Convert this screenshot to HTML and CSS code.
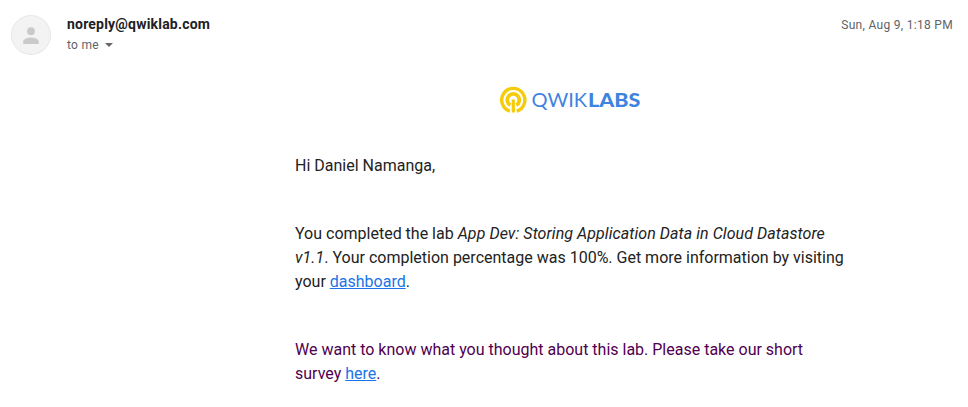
FILE: index.html
```
<!DOCTYPE html>
<html lang="en">
<head>
<meta charset="utf-8">
<title>Qwiklabs</title>
<link rel="stylesheet" href="styles.css">
</head>
<body>
<header class="header">
  <svg class="avatar" width="40" height="40" viewBox="0 0 40 40" aria-hidden="true">
    <circle cx="20" cy="20" r="19.5" fill="#f3f3f3" stroke="#e6e6e6"/>
    <circle cx="20" cy="16.2" r="3.9" fill="#cacaca"/>
    <path d="M12.2 29v-2.4c0-2.6 5.2-4 7.8-4s7.8 1.4 7.8 4V29z" fill="#cacaca"/>
  </svg>
  <div class="sender">
    <div class="address">noreply@qwiklab.com</div>
    <div class="recipient">to me <span class="caret"></span></div>
  </div>
  <time class="date">Sun, Aug 9, 1:18 PM</time>
</header>
<main class="message">
  <svg class="logo" width="142" height="28" viewBox="0 0 142 28" role="img" aria-label="Qwiklabs">
    <g fill="none" stroke="#f5cc0c">
      <path stroke-width="3.4" d="M9.9 25.1A11.6 11.6 0 1 1 16.7 25.1"/>
      <path stroke-width="3.8" d="M10.4 19.2A6 6 0 1 1 16.2 19.2"/>
      <path stroke-width="3.2" d="M13.3 13.5v13"/>
    </g>
    <text class="logo-light" x="31.6" y="20.6" textLength="55.5" lengthAdjust="spacingAndGlyphs">QWIK</text>
    <text class="logo-bold" x="88" y="20.6" textLength="52.3" lengthAdjust="spacingAndGlyphs">LABS</text>
  </svg>
  <p>Hi Daniel Namanga,</p>
  <p>You completed the lab <em>App Dev: Storing Application Data in Cloud Datastore v1.1</em>. Your completion percentage was 100%. Get more information by visiting your <a href="#">dashboard</a>.</p>
  <p class="survey">We want to know what you thought about this lab. Please take our short survey <a href="#">here</a>.</p>
</main>
</body>
</html>
```
FILE: styles.css
```
body {
  margin: 0;
  background: #fff;
  color: #222;
  font-family: Roboto, "Liberation Sans", sans-serif;
}

.header {
  display: flex;
  align-items: flex-start;
  box-sizing: border-box;
  height: 86px;
  padding: 15px 15px 0 11px;
}

.avatar {
  flex: none;
}

.sender {
  margin: -1px 0 0 16px;
}

.address {
  color: #202124;
  font-size: 14px;
  font-weight: 700;
  line-height: 20px;
  letter-spacing: 0.2px;
}

.recipient {
  display: flex;
  align-items: center;
  margin-top: 1px;
  color: #5f6368;
  font-size: 12px;
  line-height: 20px;
  letter-spacing: 0.3px;
}

.caret {
  margin-left: 6px;
  border: 4px solid transparent;
  border-top-color: #666;
  border-bottom: 0;
}

.date {
  margin-left: auto;
  color: #5f6368;
  font-size: 12px;
  line-height: 20px;
  letter-spacing: 0.3px;
}

.message {
  width: 550px;
  margin-left: 295px;
}

.logo {
  display: block;
  margin: 0 0 40px 205px;
}

.logo text {
  fill: #3f83e0;
  font-family: Lato, sans-serif;
  font-size: 19.3px;
}

.logo .logo-light {
  font-weight: 400;
}

.logo .logo-bold {
  font-weight: 900;
}

p {
  margin: 0 0 44px;
  font-size: 16px;
  line-height: 24px;
}

em {
  letter-spacing: 0.065px;
}

a {
  color: #1a73e8;
}

.survey {
  margin-bottom: 0;
  color: #500050;
}
```
